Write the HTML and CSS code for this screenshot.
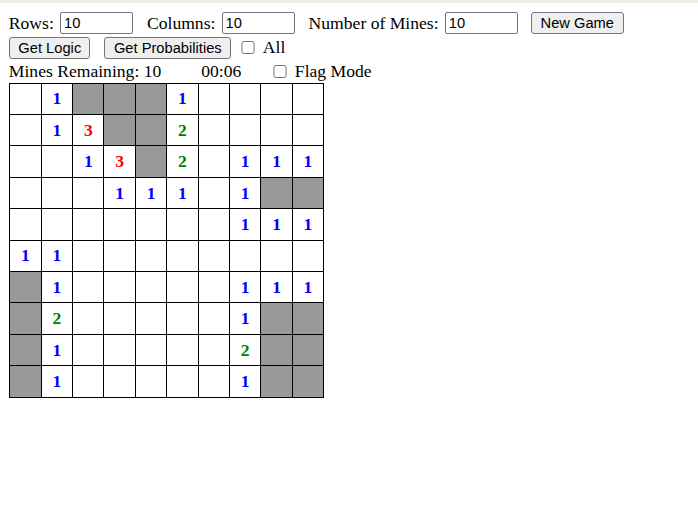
FILE: index.html
```html
<!DOCTYPE html>
<html>
<head>
<meta charset="utf-8">
<link rel="stylesheet" href="styles.css">
</head>
<body>
<div class="bar bar1">
  <span class="label">Rows:</span><input class="num" type="text" value="10">
  <span class="label gap">Columns:</span><input class="num" type="text" value="10">
  <span class="label gap">Number of Mines:</span><input class="num" type="text" value="10">
  <button class="btn btn-new">New Game</button>
</div>
<div class="bar bar2">
  <button class="btn btn-logic">Get Logic</button>
  <button class="btn btn-prob">Get Probabilities</button>
  <input class="chk chk-all" type="checkbox">
  <span class="label chk-label">All</span>
</div>
<div class="bar bar3">
  <span class="label">Mines Remaining: 10</span>
  <span class="label timer">00:06</span>
  <input class="chk chk-flag" type="checkbox">
  <span class="label chk-label">Flag Mode</span>
</div>
<div class="board">
  <div class="cell"></div><div class="cell n1">1</div><div class="cell hid"></div><div class="cell hid"></div><div class="cell hid"></div><div class="cell n1">1</div><div class="cell"></div><div class="cell"></div><div class="cell"></div><div class="cell"></div>
  <div class="cell"></div><div class="cell n1">1</div><div class="cell n3">3</div><div class="cell hid"></div><div class="cell hid"></div><div class="cell n2">2</div><div class="cell"></div><div class="cell"></div><div class="cell"></div><div class="cell"></div>
  <div class="cell"></div><div class="cell"></div><div class="cell n1">1</div><div class="cell n3">3</div><div class="cell hid"></div><div class="cell n2">2</div><div class="cell"></div><div class="cell n1">1</div><div class="cell n1">1</div><div class="cell n1">1</div>
  <div class="cell"></div><div class="cell"></div><div class="cell"></div><div class="cell n1">1</div><div class="cell n1">1</div><div class="cell n1">1</div><div class="cell"></div><div class="cell n1">1</div><div class="cell hid"></div><div class="cell hid"></div>
  <div class="cell"></div><div class="cell"></div><div class="cell"></div><div class="cell"></div><div class="cell"></div><div class="cell"></div><div class="cell"></div><div class="cell n1">1</div><div class="cell n1">1</div><div class="cell n1">1</div>
  <div class="cell n1">1</div><div class="cell n1">1</div><div class="cell"></div><div class="cell"></div><div class="cell"></div><div class="cell"></div><div class="cell"></div><div class="cell"></div><div class="cell"></div><div class="cell"></div>
  <div class="cell hid"></div><div class="cell n1">1</div><div class="cell"></div><div class="cell"></div><div class="cell"></div><div class="cell"></div><div class="cell"></div><div class="cell n1">1</div><div class="cell n1">1</div><div class="cell n1">1</div>
  <div class="cell hid"></div><div class="cell n2">2</div><div class="cell"></div><div class="cell"></div><div class="cell"></div><div class="cell"></div><div class="cell"></div><div class="cell n1">1</div><div class="cell hid"></div><div class="cell hid"></div>
  <div class="cell hid"></div><div class="cell n1">1</div><div class="cell"></div><div class="cell"></div><div class="cell"></div><div class="cell"></div><div class="cell"></div><div class="cell n2">2</div><div class="cell hid"></div><div class="cell hid"></div>
  <div class="cell hid"></div><div class="cell n1">1</div><div class="cell"></div><div class="cell"></div><div class="cell"></div><div class="cell"></div><div class="cell"></div><div class="cell n1">1</div><div class="cell hid"></div><div class="cell hid"></div>
</div>
</body>
</html>
```
FILE: styles.css
```css
html {
  border-top: 3px solid #eeeee4;
  background: #ffffff;
}
body {
  margin: 8.8px;
  font-family: "Liberation Serif", "Times New Roman", serif;
  font-size: 17.6px;
  color: #000;
}
.bar {
  display: flex;
  align-items: center;
  white-space: nowrap;
}
.bar1 { height: 23px; }
.bar2 { height: 25.8px; }
.bar3 { height: 22.1px; }
.label { line-height: normal; }
.gap { margin-left: 14px; }
.num {
  box-sizing: border-box;
  width: 73px;
  height: 22.4px;
  margin: 0 0 0 6.2px;
  padding: 1px 3px;
  border: 1px solid #767676;
  border-radius: 2px;
  font-family: "Liberation Sans", Arial, sans-serif;
  font-size: 14.7px;
  color: #000;
  background: #fff;
}
.btn {
  box-sizing: border-box;
  height: 22.2px;
  margin: 0;
  padding: 0 6px;
  border: 1px solid #767676;
  border-radius: 3px;
  background: #efefef;
  font-family: "Liberation Sans", Arial, sans-serif;
  font-size: 14.7px;
  color: #000;
}
.btn-new { width: 93px; margin-left: 13px; }
.btn-logic { width: 81px; margin-left: 0.5px; }
.btn-prob { width: 127px; margin-left: 14px; }
.chk {
  width: 13.5px;
  height: 13.5px;
  margin: 0;
}
.chk-all { margin-left: 10px; }
.chk-flag { margin-left: 32px; }
.chk-label { margin-left: 8px; }
.timer { margin-left: 40px; }
.board {
  display: grid;
  grid-template-columns: repeat(10, 30.4px);
  grid-auto-rows: 30.4px;
  gap: 1px;
  padding: 1px;
  background: #000;
  width: max-content;
  margin-left: 0.5px;
}
.cell {
  background: #fff;
  display: flex;
  align-items: center;
  justify-content: center;
  font-family: "Liberation Serif", "Times New Roman", serif;
  font-weight: bold;
  font-size: 17.6px;
}
.hid { background: #999999; }
.n1 { color: #0000ff; }
.n2 { color: #008000; }
.n3 { color: #ff0000; }
```
